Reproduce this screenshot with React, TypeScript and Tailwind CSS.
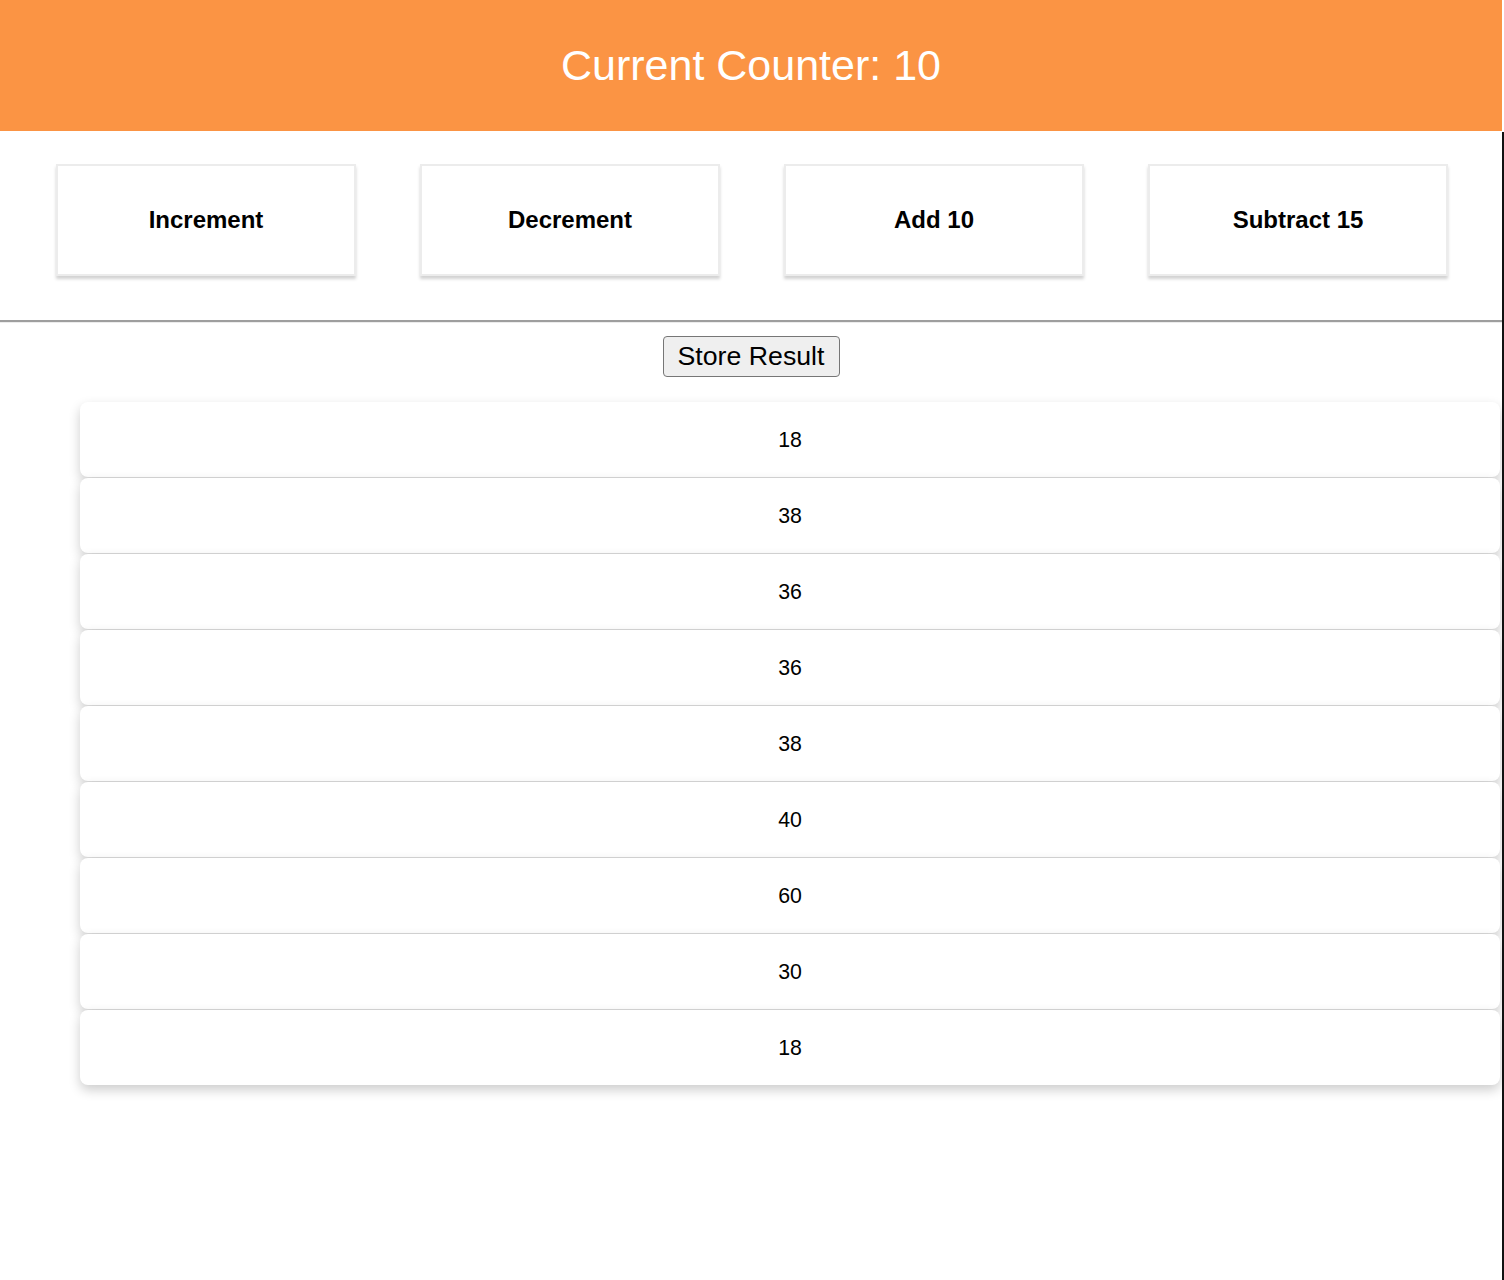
import React from "react";

const actions = ["Increment", "Decrement", "Add 10", "Subtract 15"];
const results = [18, 38, 36, 36, 38, 40, 60, 30, 18];

export default function App() {
  return (
    <div
      className="flex w-[1504px] min-h-[1280px] bg-white text-black"
      style={{ fontFamily: '"Liberation Sans", Arial, sans-serif' }}
    >
      <div className="w-[1502px] flex flex-col">
        <header className="h-[131px] bg-[#fb9444] flex items-center justify-center">
          <h1 className="text-[43px] leading-none text-white font-normal">Current Counter: 10</h1>
        </header>
        <div className="h-[189px] flex items-start justify-center gap-[64px] pt-[33px] pl-[2px]">
          {actions.map((a) => (
            <div
              key={a}
              className="w-[300px] h-[112px] flex items-center justify-center border-2 border-[#ececec] bg-white shadow-[0_3px_3px_rgba(0,0,0,0.18)] text-[24px] font-bold"
            >
              {a}
            </div>
          ))}
        </div>
        <div className="h-[2px] bg-[#9e9e9e]" />
        <div className="h-[1px] bg-[#ececec]" />
        <div className="flex justify-center pt-[13px]">
          <button className="w-[177px] h-[41px] border border-[#767676] rounded-[4px] bg-[#efefef] text-[26.7px] leading-none text-black">
            Store Result
          </button>
        </div>
        <ul className="flex flex-col gap-[1px] pl-[80px] pr-[2px] mt-[25px]">
          {results.map((r, i) => (
            <li
              key={i}
              className="h-[75px] rounded-[8px] bg-white shadow-[0_5px_12px_rgba(0,0,0,0.2)] flex items-center justify-center text-[21.3px] pt-[2px]"
            >
              {r}
            </li>
          ))}
        </ul>
      </div>
      <div className="w-[2px] flex flex-col">
        <div className="h-[132px] bg-white" />
        <div className="flex-1 bg-[#111111]" />
      </div>
    </div>
  );
}
